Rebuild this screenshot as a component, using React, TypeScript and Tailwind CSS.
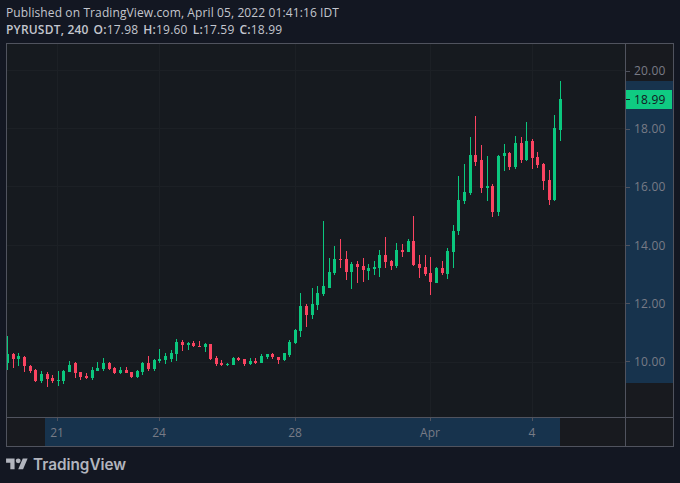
const GREEN = '#0bc77e'
const RED = '#fb4461'

type Candle = { up: boolean; wickTop: number; wickBot: number; top: number; bot: number }

// rows are up, wick top, wick bottom, body top, body bottom in thirds of a pixel from base
function seg(base: number, rows: [number, number, number, number, number][]): Candle[] {
  return rows.map(([u, a, b, c, d]) => ({
    up: u === 1,
    wickTop: base + a / 3,
    wickBot: base + b / 3,
    top: base + c / 3,
    bot: base + d / 3,
  }))
}

const candles: Candle[] = [
  ...seg(320, [
    [1, 48, 150, 102, 130], [0, 99, 144, 102, 117], [1, 99, 138, 108, 117], [0, 108, 156, 111, 138],
    [0, 135, 159, 138, 153], [0, 148, 186, 150, 183], [1, 153, 189, 162, 183], [0, 156, 201, 162, 177],
    [0, 165, 189, 174, 183], [1, 153, 198, 180, 183], [1, 150, 192, 153, 183], [1, 123, 156, 135, 156],
    [0, 126, 174, 129, 159], [0, 156, 180, 156, 171], [0, 159, 177, 168, 174], [1, 141, 180, 150, 174],
    [1, 126, 153, 144, 153], [1, 114, 153, 129, 147], [0, 126, 150, 129, 147], [0, 141, 162, 144, 159],
    [1, 141, 162, 150, 159], [0, 141, 159, 150, 159], [0, 156, 174, 156, 171], [1, 150, 174, 153, 171],
    [1, 126, 165, 129, 156], [0, 108, 153, 129, 147], [1, 117, 153, 120, 147], [1, 87, 129, 117, 123],
    [1, 99, 132, 108, 120], [1, 90, 126, 99, 117], [1, 57, 123, 66, 102], [0, 60, 93, 66, 75],
    [1, 66, 90, 69, 75], [0, 63, 81, 69, 78], [0, 63, 81, 78, 81], [1, 69, 96, 72, 81],
    [0, 72, 120, 72, 117], [0, 108, 138, 114, 132], [0, 120, 138, 129, 135], [1, 129, 138, 132, 135],
    [1, 111, 135, 114, 135], [0, 111, 123, 114, 120], [0, 117, 138, 117, 132], [1, 114, 135, 123, 132],
    [0, 114, 132, 123, 129], [1, 102, 129, 108, 129], [1, 102, 117, 102, 111], [0, 99, 117, 102, 111],
    [0, 111, 132, 111, 120], [1, 99, 123, 99, 120],
  ]),
  ...seg(200, [
    [1, 420, 470, 426, 465], [1, 387, 432, 390, 429], [1, 279, 411, 318, 393], [0, 312, 381, 318, 345],
    [1, 264, 357, 312, 345], [1, 258, 330, 279, 315], [1, 63, 288, 258, 282], [1, 174, 264, 216, 264],
    [1, 138, 225, 177, 219], [0, 117, 204, 177, 180], [0, 153, 240, 177, 216], [1, 186, 267, 192, 216],
    [0, 183, 249, 192, 201], [0, 174, 246, 198, 210], [1, 192, 240, 204, 213], [1, 183, 225, 201, 207],
    [1, 150, 231, 165, 204], [0, 111, 204, 165, 186], [0, 180, 210, 183, 198], [1, 129, 204, 150, 198],
    [0, 132, 171, 150, 156], [1, 117, 156, 123, 156], [0, 48, 198, 123, 195], [0, 165, 234, 192, 204],
    [0, 165, 228, 201, 222], [0, 171, 285, 219, 246], [1, 201, 249, 204, 249], [0, 183, 225, 204, 219],
    [1, 144, 237, 153, 222], [1, 75, 204, 93, 156],
  ]),
  ...seg(60, [
    [1, 348, 525, 420, 513], [1, 312, 432, 396, 423], [1, 231, 405, 285, 399], [0, 168, 318, 285, 306],
    [0, 255, 399, 300, 384], [1, 288, 423, 378, 384], [0, 372, 471, 378, 456], [1, 285, 468, 288, 456],
    [1, 252, 333, 279, 288], [0, 276, 330, 279, 321], [1, 228, 327, 249, 321], [0, 231, 309, 249, 300],
    [1, 186, 303, 243, 300], [0, 237, 327, 243, 294], [0, 276, 324, 291, 315], [0, 309, 390, 312, 363],
    [0, 330, 435, 360, 420], [1, 165, 423, 204, 420], [1, 63, 243, 117, 210],
  ]),
]

const gridX = [57, 159, 295, 430, 532]
const gridY = [70, 128, 186, 245, 303, 362]
const prices = ['20.00', '18.00', '16.00', '14.00', '12.00', '10.00']

function PriceChart() {
  return (
    <svg viewBox="7 44 618 373" shapeRendering="crispEdges" className="block w-[618px] h-[373px]">
      {gridX.map((x) => (
        <rect key={x} x={x} y={44} width={1} height={373} fill="#1c2025" />
      ))}
      {gridY.map((y) => (
        <rect key={y} x={7} y={y} width={618} height={1} fill="#1c2025" />
      ))}
      {candles.map((c, i) => {
        const x = Math.floor(7.5 + i * 5.643)
        const color = c.up ? GREEN : RED
        return (
          <g key={i} fill={color}>
            <rect x={x} y={c.wickTop} width={1} height={c.wickBot - c.wickTop} />
            <rect x={x - 1} y={c.top} width={3} height={Math.max(c.bot - c.top, 1)} />
          </g>
        )
      })}
    </svg>
  )
}

function TimeLabel({ label, className }: { label: string; className: string }) {
  return (
    <div className={`flex flex-col items-center w-10 ${className}`}>
      <div className="w-px h-[3px] bg-[#50535e]" />
      <span className="mt-[4px] leading-4">{label}</span>
    </div>
  )
}

function Logo() {
  return (
    <svg viewBox="0 0 36 28" className="w-[22px] h-[17px] shrink-0 mb-[2px]" fill="#b2b5be">
      <path d="M14 22H7V11H0V4h14v18zM28 22h-8l7.5-18h8L28 22z" />
      <circle cx="20" cy="8" r="4" />
    </svg>
  )
}

export default function App() {
  return (
    <div className="w-[680px] h-[483px] overflow-hidden bg-[#131722] px-[6px] font-['Open_Sans',sans-serif]">
      <div className="pt-[4px] h-[43px] text-xs leading-[17px] tracking-[0.11px] text-[#c3c6ce]">
        <div>Published on TradingView.com, April 05, 2022 01:41:16 IDT</div>
        <div className="flex gap-[5px]">
          <span className="font-semibold tracking-[0.2px]">PYRUSDT, 240</span>
          <span className="tracking-[0.2px]"><b className="font-semibold">O:</b>17.98</span>
          <span className="tracking-[0.2px]"><b className="font-semibold">H:</b>19.60</span>
          <span className="tracking-[0.2px]"><b className="font-semibold">L:</b>17.59</span>
          <span className="tracking-[0.2px]"><b className="font-semibold">C:</b>18.99</span>
        </div>
      </div>

      <div className="w-[668px] h-[404px] border border-[#50535e] bg-[#181a1f]">
        <div className="flex h-[373px] border-b border-[#50535e] box-content">
          <div className="w-[618px] bg-[#161a1f]">
            <PriceChart />
          </div>
          <div className="relative flex-1 border-l border-[#50535e] text-xs text-[#787b86]">
            <div className="absolute left-0 right-0 top-[37px] h-[302px] bg-[#17334d]" />
            <div className="relative flex flex-col gap-[44.2px] pt-[20px]">
              {prices.map((p) => (
                <div key={p} className="flex items-center h-[14px]">
                  <div className="w-[4px] h-px bg-[#50535e]" />
                  <span className="ml-[4px] tracking-[0.2px]">{p}</span>
                </div>
              ))}
            </div>
            <div className="absolute left-0 top-[46px] w-[46px] h-[19px] flex items-center bg-[#0fcb82] text-[#131722]">
              <div className="w-[4px] h-px bg-[#131722]" />
              <span className="ml-[4px] tracking-[0.2px]">18.99</span>
            </div>
          </div>
        </div>
        <div className="flex h-[28px]">
          <div className="relative w-[618px] text-xs text-[#787b86]">
            <div className="absolute left-[38px] top-0 bottom-0 w-[515px] bg-[#17334d]" />
            <div className="relative flex pl-[30px]">
              <TimeLabel label="21" className="" />
              <TimeLabel label="24" className="ml-[62px]" />
              <TimeLabel label="28" className="ml-[96px]" />
              <TimeLabel label="Apr" className="ml-[95px]" />
              <TimeLabel label="4" className="ml-[62px]" />
            </div>
          </div>
          <div className="flex-1 border-l border-[#50535e]" />
        </div>
      </div>

      <div className="flex items-center gap-[5px] mt-[7px] text-[#b2b5be] font-['Inter',sans-serif] text-[15.3px] font-semibold leading-[22px]">
        <Logo />
        <span>TradingView</span>
      </div>
    </div>
  )
}
